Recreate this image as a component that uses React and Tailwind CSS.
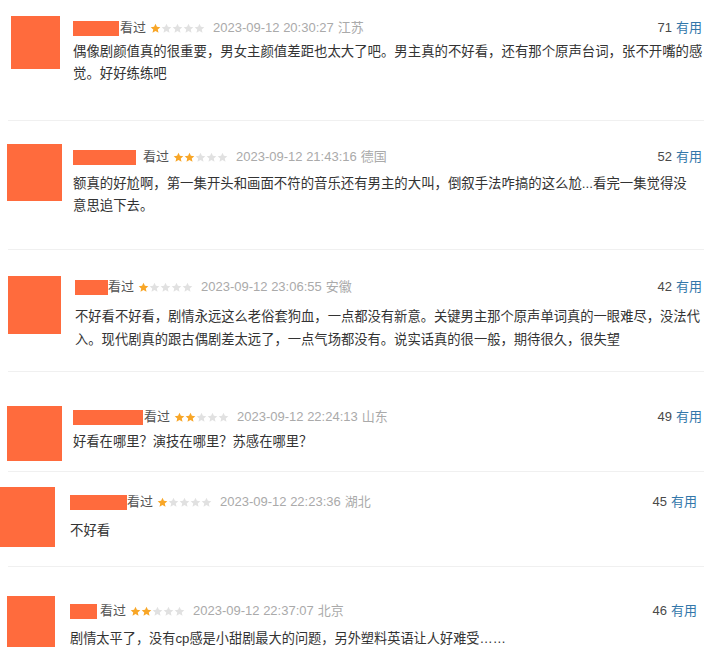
import React from "react";

const FONT = { fontFamily: '"Liberation Sans", Arial, "Noto Sans CJK SC", sans-serif' };

const reviews = [
  {
    stars: 1,
    time: "2023-09-12 20:30:27",
    place: "江苏",
    votes: 71,
    lines: ["偶像剧颜值真的很重要，男女主颜值差距也太大了吧。男主真的不好看，还有那个原声台词，张不开嘴的感", "觉。好好练练吧"],
    box: "h-[121px]",
    avatar: "ml-[11px] mt-[16px] w-[49px] h-[53px]",
    body: "ml-[13px] mt-[18px]",
    bar: "w-[46px]",
    seen: "ml-[1px]",
    gap: "mt-[3px]",
    text: "text-[13.4px] leading-[22px]",
    right: "pr-[17px]",
  },
  {
    stars: 2,
    time: "2023-09-12 21:43:16",
    place: "德国",
    votes: 52,
    lines: ["额真的好尬啊，第一集开头和画面不符的音乐还有男主的大叫，倒叙手法咋搞的这么尬...看完一集觉得没", "意思追下去。"],
    box: "h-[129px]",
    avatar: "ml-[7px] mt-[23px] w-[55px] h-[57px]",
    body: "ml-[11px] mt-[26px]",
    bar: "w-[63px]",
    seen: "ml-[7px]",
    gap: "mt-[6px]",
    text: "text-[13.4px] leading-[22px]",
    right: "pr-[17px]",
  },
  {
    stars: 1,
    time: "2023-09-12 23:06:55",
    place: "安徽",
    votes: 42,
    lines: ["不好看不好看，剧情永远这么老俗套狗血，一点都没有新意。关键男主那个原声单词真的一眼难尽，没法代", "入。现代剧真的跟古偶剧差太远了，一点气场都没有。说实话真的很一般，期待很久，很失望"],
    box: "h-[122px]",
    avatar: "ml-[8px] mt-[26px] w-[53px] h-[58px]",
    body: "ml-[14px] mt-[27px]",
    bar: "w-[33px]",
    seen: "ml-0",
    gap: "mt-[8px]",
    text: "text-[13.3px] leading-[23px]",
    right: "pr-[17px]",
  },
  {
    stars: 2,
    time: "2023-09-12 22:24:13",
    place: "山东",
    votes: 49,
    lines: ["好看在哪里？演技在哪里？苏感在哪里？"],
    box: "h-[100px]",
    avatar: "ml-[7px] mt-[34px] w-[55px] h-[55px]",
    body: "ml-[11px] mt-[35px]",
    bar: "w-[70px]",
    seen: "ml-[1px]",
    gap: "mt-[4px]",
    text: "text-[13.3px] leading-[22px]",
    right: "pr-[17px]",
  },
  {
    stars: 1,
    time: "2023-09-12 22:23:36",
    place: "湖北",
    votes: 45,
    lines: ["不好看"],
    box: "h-[95px]",
    avatar: "ml-0 mt-[15px] w-[55px] h-[60px]",
    body: "ml-[15px] mt-[20px]",
    bar: "w-[57px]",
    seen: "ml-0",
    gap: "mt-[8px]",
    text: "text-[13.4px] leading-[22px]",
    right: "pr-[22px]",
  },
  {
    stars: 2,
    time: "2023-09-12 22:37:07",
    place: "北京",
    votes: 46,
    lines: ["剧情太平了，没有cp感是小甜剧最大的问题，另外塑料英语让人好难受……"],
    box: "h-[95px]",
    avatar: "ml-[7px] mt-[29px] w-[48px] h-[51px]",
    body: "ml-[15px] mt-[34px]",
    bar: "w-[27px]",
    seen: "ml-[3px]",
    gap: "mt-[7px]",
    text: "text-[13.2px] leading-[22px]",
    right: "pr-[22px]",
  },
];

function Star({ on }) {
  return (
    <svg width="11" height="11" viewBox="0 0 24 24" className="shrink-0">
      <path
        d="M12 1.5l3.1 6.9 7.4.7-5.6 5 1.7 7.4L12 17.6l-6.6 3.9 1.7-7.4-5.6-5 7.4-.7z"
        fill={on ? "#f8a627" : "#e1e1e1"}
      />
    </svg>
  );
}

function Review({ r, last }) {
  return (
    <div className={`${r.box} flex relative`}>
      <div className={`${r.avatar} shrink-0 bg-[#ff6b3d]`} />
      <div className={`${r.body} ${r.right} flex-1 min-w-0`}>
        <div className="flex items-center h-[20px] text-[13px]">
          <span className={`${r.bar} h-[15px] bg-[#ff6b3d]`} />
          <span className={`${r.seen} text-[#555]`}>看过</span>
          <span className="flex ml-[4px]">
            {[0, 1, 2, 3, 4].map((i) => (
              <Star key={i} on={i < r.stars} />
            ))}
          </span>
          <span className="text-[#aaa] ml-[8px]">{r.time}</span>
          <span className="text-[#aaa] ml-[4px]">{r.place}</span>
          <span className="ml-auto text-[#494949]">{r.votes}</span>
          <span className="ml-[4px] text-[#3377aa]">有用</span>
        </div>
        <div className={`${r.gap} ${r.text} text-[#333] whitespace-nowrap`}>
          {r.lines.map((l, i) => (
            <div key={i}>{l}</div>
          ))}
        </div>
      </div>
      {!last && <div className="absolute left-[8px] right-[15px] bottom-0 h-px bg-[#f0f0f0]" />}
    </div>
  );
}

export default function App() {
  return (
    <div className="w-[719px] h-[662px] overflow-hidden bg-white" style={FONT}>
      {reviews.map((r, i) => (
        <Review key={i} r={r} last={i === reviews.length - 1} />
      ))}
    </div>
  );
}
